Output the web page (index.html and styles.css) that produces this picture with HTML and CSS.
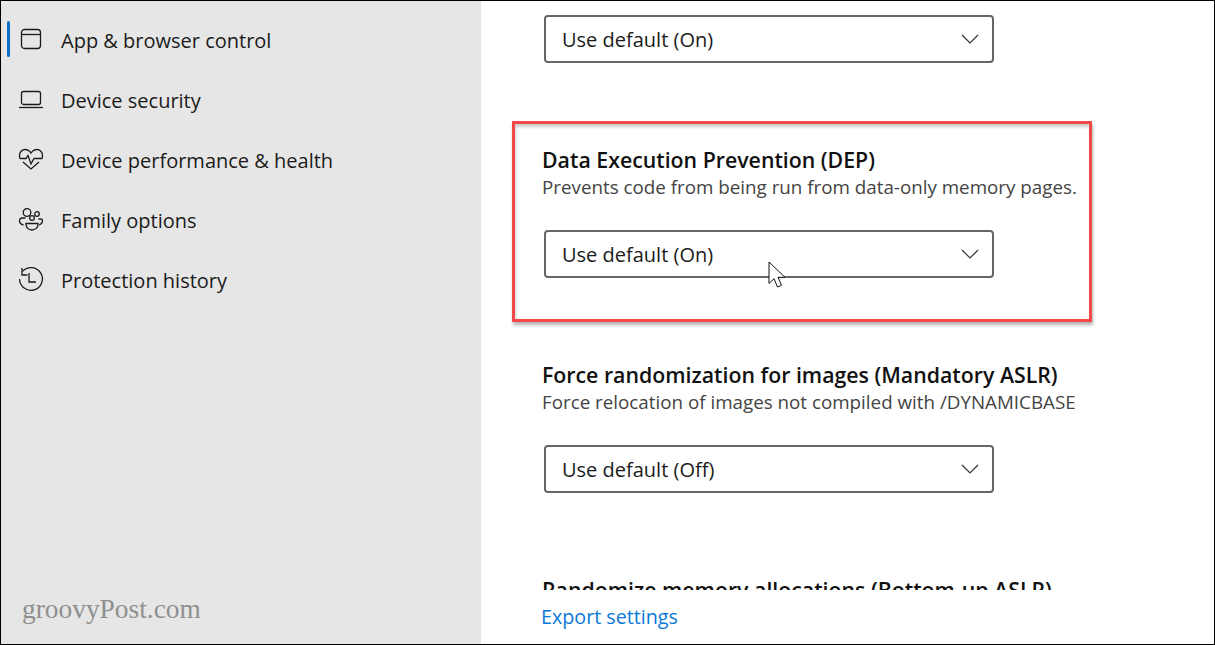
FILE: index.html
```html
<!DOCTYPE html>
<html lang="en">
<head>
<meta charset="utf-8">
<title>App &amp; browser control</title>
<link rel="stylesheet" href="styles.css">
</head>
<body>
<div class="frame">
  <aside class="sidebar">
    <nav class="nav">
      <a class="nav-item active">
        <svg class="nav-icon" viewBox="0 0 24 24"><rect x="2.500" y="2.500" width="19" height="19" rx="3"/><path d="M2.500 7.500h19"/></svg>
        <span>App &amp; browser control</span>
      </a>
      <a class="nav-item">
        <svg class="nav-icon" viewBox="0 0 24 24"><rect x="2.500" y="4.500" width="19" height="13" rx="2"/><path d="M0 20.500h24"/></svg>
        <span>Device security</span>
      </a>
      <a class="nav-item">
        <svg class="nav-icon" viewBox="0 0 24 24"><path d="M.8 11.500C.5 10.500.5 9.500.5 8.500c0-3.500 2.500-6 5.500-6 2.500 0 4.500 1.300 6 3.500 1.500-2.200 3.500-3.500 6-3.500 3 0 5.500 2.500 5.500 6 0 1-.1 2-.3 3"/><path d="M.8 11.500H7l2-3 3 8.500 3-5.500h8.200"/><path d="M4 15l8 7 8-7"/></svg>
        <span>Device performance &amp; health</span>
      </a>
      <a class="nav-item">
        <svg class="nav-icon" viewBox="0 0 24 24"><circle cx="8" cy="5.500" r="3.800"/><circle cx="18" cy="7" r="2.300"/><circle cx="13" cy="11" r="2.300"/><path d="M6.500 11H3a2.500 2.500 0 0 0-2.500 2.500c0 2.500 1.500 4 4 4.500"/><path d="M19.500 12H22a1.600 1.600 0 0 1 1.500 1.600c0 2-1.300 3.700-3.500 4.400"/><path d="M7 16.500h12v1c0 3-2.500 5.500-6 5.500s-6-2.500-6-5.500z"/></svg>
        <span>Family options</span>
      </a>
      <a class="nav-item">
        <svg class="nav-icon" viewBox="0 0 24 24"><path d="M3 1v7h5.500"/><path d="M3.500 4.350A11.400 11.400 0 1 1 .6 12"/><path d="M10 6v9h7"/></svg>
        <span>Protection history</span>
      </a>
    </nav>
    <div class="watermark">groovyPost.com</div>
  </aside>
  <main class="main">
    <div class="scroll">
      <div class="select first"><span>Use default (On)</span><svg class="chev" viewBox="0 0 18 10"><path d="M1 1l8 8 8-8"/></svg></div>
      <section class="setting highlighted">
        <h2>Data Execution Prevention (DEP)</h2>
        <p>Prevents code from being run from data-only memory pages.</p>
        <div class="select"><span>Use default (On)</span><svg class="chev" viewBox="0 0 18 10"><path d="M1 1l8 8 8-8"/></svg></div>
        <svg class="cursor" viewBox="0 0 19 29"><path d="M1 1v21.500l5-4.800 3.500 8.300 4-1.700-3.500-8h7z"/></svg>
      </section>
      <section class="setting">
        <h2>Force randomization for images (Mandatory ASLR)</h2>
        <p>Force relocation of images not compiled with /DYNAMICBASE</p>
        <div class="select"><span>Use default (Off)</span><svg class="chev" viewBox="0 0 18 10"><path d="M1 1l8 8 8-8"/></svg></div>
      </section>
      <section class="setting">
        <h2>Randomize memory allocations (Bottom-up ASLR)</h2>
      </section>
    </div>
    <a class="export">Export settings</a>
  </main>
</div>
</body>
</html>
```
FILE: styles.css
```css
* { box-sizing: border-box; }
html, body { margin: 0; height: 100%; overflow: hidden; background: #000; }
body { font-family: "Open Sans", "Noto Sans", sans-serif; }
.frame { display: flex; height: 643px; margin: 1px 1px 0; background: #fff; }
.sidebar { width: 480px; background: #e6e6e6; display: flex; flex-direction: column; justify-content: space-between; }
.nav { display: flex; flex-direction: column; padding-top: 8px; }
.nav-item { position: relative; display: flex; align-items: center; height: 60px; padding-left: 18px; gap: 18px; font-size: 20px; color: #1b1b1b; }
.nav-item span { position: relative; top: 1px; }
.nav-item.active::before { content: ""; position: absolute; left: 6px; top: 12px; width: 3px; height: 36px; border-radius: 2px; background: #0a6fc9; }
.nav-icon { width: 24px; height: 24px; fill: none; stroke: #1b1b1b; stroke-width: 1.300; flex: none; overflow: visible; }
.watermark { font-family: "Liberation Serif", serif; font-size: 27.4px; color: #8f8f8f; padding: 0 0 19px 21px; }
.main { flex: 1; position: relative; display: flex; flex-direction: column; min-width: 0; }
.scroll { height: 589px; overflow: hidden; padding: 14px 0 0 61px; flex: none; }
.select { width: 450px; height: 48px; margin-left: 2px; border: 2px solid #666; border-radius: 4px; display: flex; align-items: center; justify-content: space-between; padding: 0 13px 0 16px; font-size: 20px; color: #1b1b1b; background: #fff; flex: none; }
.chev { width: 18px; height: 10px; fill: none; stroke: #333; stroke-width: 1.200; }
.setting { position: relative; margin-top: 82px; }
.setting h2 { margin: 0; font-size: 21.3px; font-weight: 600; color: #111; line-height: 30px; }
.setting p { margin: 0 0 31px; font-size: 18.8px; color: #444; line-height: 24px; white-space: nowrap; }
.highlighted::before { content: ""; position: absolute; box-sizing: border-box; left: -30px; top: -24px; width: 580px; height: 201px; border: 3px solid #f44747; box-shadow: 1px 3px 3px rgba(0,0,0,.3), inset 1px 3px 3px rgba(0,0,0,.2); pointer-events: none; }
.cursor { position: absolute; left: 226px; top: 116px; width: 19px; height: 29px; fill: #fff; stroke: #111; stroke-width: 1; }
.export { padding: 13px 0 0 60px; font-size: 19.700px; color: #0a78d7; }
```
